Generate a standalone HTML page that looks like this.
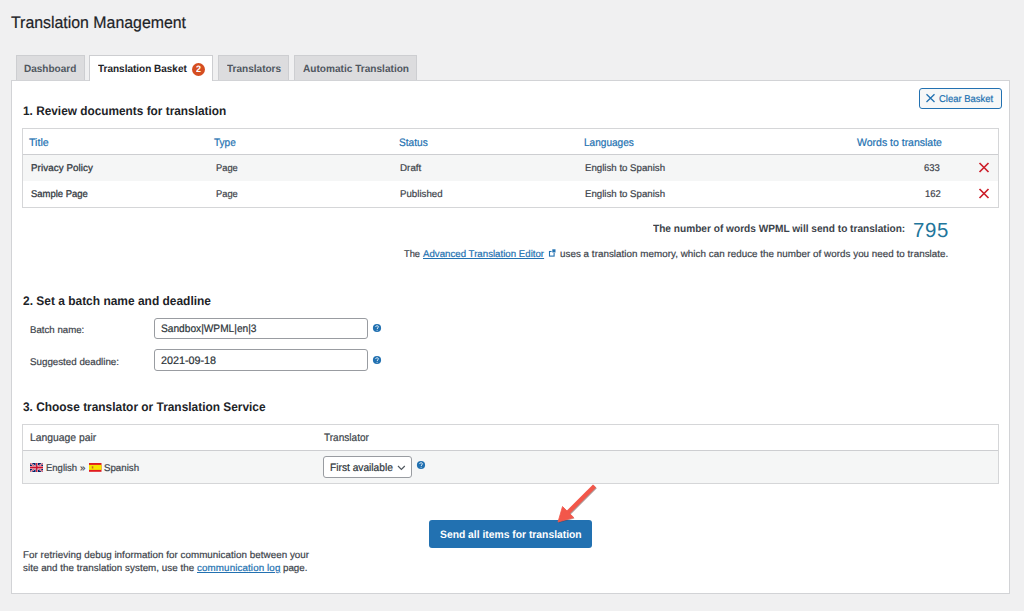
<!DOCTYPE html>
<html><head><meta charset="utf-8"><title>Translation Management</title><style>
html,body{margin:0;padding:0;}
body{width:1024px;height:611px;overflow:hidden;background:#f0f0f1;position:relative;font-family:"Liberation Sans",sans-serif;}
.t{position:absolute;white-space:nowrap;transform-origin:0 0;text-rendering:geometricPrecision;-webkit-text-stroke:0.2px currentColor;}
.r{position:absolute;box-sizing:border-box;}
svg{position:absolute;}
</style></head><body>
<div class="r" style="left:11px;top:80px;width:999.00px;height:514.30px;background:#fff;border:1px solid #d2d3d6;"></div>
<div class="r" style="left:16px;top:55px;width:69.00px;height:25.00px;background:#dcdcde;border:1px solid #cdced1;border-bottom:none;"></div>
<div class="r" style="left:89px;top:55px;width:124.00px;height:26.00px;background:#fff;border:1px solid #cdced1;border-bottom:none;"></div>
<div class="r" style="left:218px;top:55px;width:71.00px;height:25.00px;background:#dcdcde;border:1px solid #cdced1;border-bottom:none;"></div>
<div class="r" style="left:294px;top:55px;width:123.00px;height:25.00px;background:#dcdcde;border:1px solid #cdced1;border-bottom:none;"></div>
<div class="r" style="left:191.5px;top:62.8px;width:13.60px;height:13.60px;background:#d54e21;border-radius:50%;"></div>
<div class="r" style="left:919px;top:88px;width:83.00px;height:21.00px;background:#f6f7f7;border:1px solid #2271b1;border-radius:3px;"></div>
<svg style="left:925px;top:93px" width="11" height="10" viewBox="0 0 11 10"><path d="M1.5 1.2 L9.5 9 M9.5 1.2 L1.5 9" stroke="#2271b1" stroke-width="1.3" fill="none"/></svg>
<div class="r" style="left:22px;top:128px;width:977.00px;height:80.00px;background:#fff;border:1px solid #d5d6d8;"></div>
<div class="r" style="left:23px;top:154px;width:975.00px;height:1.30px;background:#cdced1;"></div>
<div class="r" style="left:23px;top:155px;width:975.00px;height:26.00px;background:#f5f6f6;"></div>
<svg style="left:978px;top:162.0px" width="12" height="11" viewBox="0 0 12 11"><path d="M1.5 1 L10.5 10 M10.5 1 L1.5 10" stroke="#cc1f2a" stroke-width="1.7" fill="none"/></svg>
<svg style="left:978px;top:187.6px" width="12" height="11" viewBox="0 0 12 11"><path d="M1.5 1 L10.5 10 M10.5 1 L1.5 10" stroke="#cc1f2a" stroke-width="1.7" fill="none"/></svg>
<svg style="left:547px;top:248px" width="10" height="10" viewBox="0 0 10 10"><rect x="2.5" y="3.5" width="4.6" height="4.6" stroke="#2271b1" stroke-width="1.1" fill="none"/><rect x="4.6" y="0.6" width="4.4" height="4.4" fill="#fff"/><rect x="5.3" y="1.3" width="3.2" height="3.2" fill="#2271b1"/></svg>
<div class="r" style="left:154px;top:318px;width:214.00px;height:21.00px;background:#fff;border:1px solid #999ca1;border-radius:3px;"></div>
<div class="r" style="left:154px;top:349px;width:214.00px;height:22.00px;background:#fff;border:1px solid #999ca1;border-radius:3px;"></div>
<svg style="left:372.00px;top:322.80px" width="10" height="10" viewBox="0 0 10 10"><circle cx="5" cy="5" r="4.1" fill="#2271b1"/><path d="M3.7 4 C3.7 2.3 6.4 2.3 6.4 3.9 C6.4 4.9 5.1 4.9 5.1 6" stroke="#e8f0f8" stroke-width="0.95" fill="none"/><circle cx="5.1" cy="7.3" r="0.55" fill="#e8f0f8"/></svg>
<svg style="left:372.00px;top:354.50px" width="10" height="10" viewBox="0 0 10 10"><circle cx="5" cy="5" r="4.1" fill="#2271b1"/><path d="M3.7 4 C3.7 2.3 6.4 2.3 6.4 3.9 C6.4 4.9 5.1 4.9 5.1 6" stroke="#e8f0f8" stroke-width="0.95" fill="none"/><circle cx="5.1" cy="7.3" r="0.55" fill="#e8f0f8"/></svg>
<div class="r" style="left:22px;top:424px;width:977.00px;height:60.00px;background:#f5f6f6;border:1px solid #d5d6d8;"></div>
<div class="r" style="left:23px;top:425px;width:975.00px;height:25.00px;background:#fff;"></div>
<div class="r" style="left:23px;top:450px;width:975.00px;height:1.30px;background:#cdced1;"></div>
<svg style="left:29.5px;top:463px" width="13.5" height="9" viewBox="0 0 60 30" preserveAspectRatio="none"><rect width="60" height="30" fill="#012169"/><path d="M0,0 L60,30 M60,0 L0,30" stroke="#fff" stroke-width="6"/><path d="M0,0 L60,30 M60,0 L0,30" stroke="#C8102E" stroke-width="3"/><path d="M30,0 V30 M0,15 H60" stroke="#fff" stroke-width="10"/><path d="M30,0 V30 M0,15 H60" stroke="#C8102E" stroke-width="6"/></svg>
<svg style="left:89px;top:463px" width="12.5" height="8.8" viewBox="0 0 12.5 8.8" preserveAspectRatio="none"><rect width="12.5" height="8.8" fill="#e01b1f"/><rect y="1.9" width="12.5" height="5" fill="#f5e400"/><rect x="2.8" y="3.3" width="1.5" height="2.2" fill="#d0602a"/></svg>
<div class="r" style="left:323px;top:456px;width:89.00px;height:22.00px;background:#fff;border:1px solid #999ca1;border-radius:3px;"></div>
<svg style="left:397.2px;top:464.6px" width="9" height="6" viewBox="0 0 9 6"><path d="M1 1 L4.4 4.4 L7.8 1" stroke="#50575e" stroke-width="1.15" fill="none"/></svg>
<svg style="left:415.80px;top:460.00px" width="10" height="10" viewBox="0 0 10 10"><circle cx="5" cy="5" r="4.1" fill="#2271b1"/><path d="M3.7 4 C3.7 2.3 6.4 2.3 6.4 3.9 C6.4 4.9 5.1 4.9 5.1 6" stroke="#e8f0f8" stroke-width="0.95" fill="none"/><circle cx="5.1" cy="7.3" r="0.55" fill="#e8f0f8"/></svg>
<div class="r" style="left:428.6px;top:519.9px;width:163.60px;height:28.10px;background:#2271b1;border-radius:3px;"></div>
<svg style="left:540px;top:478px" width="70" height="60" viewBox="540 478 70 60"><path d="M595.3 486.8 L567.8 514.3" stroke="rgba(70,30,30,0.45)" stroke-width="4.2" stroke-linecap="butt"/><path d="M558.8 522.8 L563.3 507.3 L574.6 518.4 Z" fill="rgba(70,30,30,0.35)"/><path d="M594.5 486 L567 513.5" stroke="#f2574a" stroke-width="4.3" stroke-linecap="butt"/><path d="M558 522 L562.5 506.5 L573.8 517.6 Z" fill="#f2574a" stroke="#f2574a" stroke-width="0.8" stroke-linejoin="round"/></svg>
<div class="t" style="left:11.10px;top:15.05px;font-size:16.6px;line-height:16.6px;color:#1d2327;transform:scaleX(0.9568);">Translation Management</div>
<div class="t" style="left:24.20px;top:64.50px;font-size:10.4px;line-height:10.4px;color:#50575e;font-weight:bold;-webkit-text-stroke:0;transform:scaleX(0.9625);">Dashboard</div>
<div class="t" style="left:98.30px;top:64.50px;font-size:10.4px;line-height:10.4px;color:#1d2327;font-weight:bold;-webkit-text-stroke:0;transform:scaleX(0.9609);">Translation Basket</div>
<div class="t" style="left:226.70px;top:64.50px;font-size:10.4px;line-height:10.4px;color:#50575e;font-weight:bold;-webkit-text-stroke:0;transform:scaleX(0.9655);">Translators</div>
<div class="t" style="left:302.70px;top:64.50px;font-size:10.4px;line-height:10.4px;color:#50575e;font-weight:bold;-webkit-text-stroke:0;transform:scaleX(0.9718);">Automatic Translation</div>
<div class="t" style="left:23.10px;top:104.90px;font-size:12.4px;line-height:12.4px;color:#1d2327;font-weight:bold;-webkit-text-stroke:0;transform:scaleX(0.9551);">1. Review documents for translation</div>
<div class="t" style="left:939.00px;top:94.62px;font-size:9.9px;line-height:9.9px;color:#2271b1;transform:scaleX(0.9597);">Clear Basket</div>
<div class="t" style="left:29.20px;top:137.66px;font-size:10.8px;line-height:10.8px;color:#2271b1;transform:scaleX(0.9854);">Title</div>
<div class="t" style="left:214.30px;top:137.66px;font-size:10.8px;line-height:10.8px;color:#2271b1;transform:scaleX(0.9315);">Type</div>
<div class="t" style="left:398.90px;top:137.66px;font-size:10.8px;line-height:10.8px;color:#2271b1;transform:scaleX(0.9388);">Status</div>
<div class="t" style="left:583.90px;top:137.66px;font-size:10.8px;line-height:10.8px;color:#2271b1;transform:scaleX(0.9327);">Languages</div>
<div class="t" style="left:856.75px;top:137.66px;font-size:10.8px;line-height:10.8px;color:#2271b1;transform:scaleX(0.9719);">Words to translate</div>
<div class="t" style="left:30.70px;top:163.90px;font-size:9.8px;line-height:9.8px;color:#2c3338;transform:scaleX(0.9999);letter-spacing:0.079px;-webkit-text-stroke:0.3px #3c434a;">Privacy Policy</div>
<div class="t" style="left:215.60px;top:163.90px;font-size:9.8px;line-height:9.8px;color:#3c434a;transform:scaleX(0.9500);">Page</div>
<div class="t" style="left:400.40px;top:163.90px;font-size:9.8px;line-height:9.8px;color:#3c434a;transform:scaleX(0.9999);letter-spacing:0.023px;">Draft</div>
<div class="t" style="left:585.30px;top:163.90px;font-size:9.8px;line-height:9.8px;color:#3c434a;transform:scaleX(0.9864);">English to Spanish</div>
<div class="t" style="left:30.70px;top:189.50px;font-size:9.8px;line-height:9.8px;color:#2c3338;transform:scaleX(0.9651);-webkit-text-stroke:0.3px #3c434a;">Sample Page</div>
<div class="t" style="left:215.60px;top:189.50px;font-size:9.8px;line-height:9.8px;color:#3c434a;transform:scaleX(0.9500);">Page</div>
<div class="t" style="left:400.40px;top:189.50px;font-size:9.8px;line-height:9.8px;color:#3c434a;transform:scaleX(0.9887);">Published</div>
<div class="t" style="left:585.30px;top:189.50px;font-size:9.8px;line-height:9.8px;color:#3c434a;transform:scaleX(0.9864);">English to Spanish</div>
<div class="t" style="left:923.71px;top:163.90px;font-size:9.8px;line-height:9.8px;color:#3c434a;transform:scaleX(0.9700);">633</div>
<div class="t" style="left:924.68px;top:189.50px;font-size:9.8px;line-height:9.8px;color:#3c434a;transform:scaleX(0.9700);">162</div>
<div class="t" style="left:653.10px;top:224.33px;font-size:10.6px;line-height:10.6px;color:#3c434a;font-weight:bold;-webkit-text-stroke:0;transform:scaleX(0.9551);">The number of words WPML will send to translation:</div>
<div class="t" style="left:912.60px;top:220.93px;font-size:20.4px;line-height:20.4px;color:#21759b;transform:scaleX(0.9999);letter-spacing:0.660px;-webkit-text-stroke:0;">795</div>
<div class="t" style="left:404.20px;top:250.00px;font-size:9.8px;line-height:9.8px;color:#3c434a;transform:scaleX(0.9500);">The</div>
<div class="t" style="left:423.00px;top:250.00px;font-size:9.8px;line-height:9.8px;color:#2271b1;transform:scaleX(0.9883);text-decoration:underline;">Advanced Translation Editor</div>
<div class="t" style="left:560.00px;top:250.00px;font-size:9.8px;line-height:9.8px;color:#3c434a;transform:scaleX(0.9999);letter-spacing:0.041px;">uses a translation memory, which can reduce the number of words you need to translate.</div>
<div class="t" style="left:23.20px;top:294.50px;font-size:12.4px;line-height:12.4px;color:#1d2327;font-weight:bold;-webkit-text-stroke:0;transform:scaleX(0.9647);">2. Set a batch name and deadline</div>
<div class="t" style="left:30.20px;top:326.00px;font-size:9.8px;line-height:9.8px;color:#3c434a;transform:scaleX(0.9865);">Batch name:</div>
<div class="t" style="left:30.20px;top:357.70px;font-size:9.8px;line-height:9.8px;color:#3c434a;transform:scaleX(0.9999);letter-spacing:-0.017px;">Suggested deadline:</div>
<div class="t" style="left:160.90px;top:324.26px;font-size:10.8px;line-height:10.8px;color:#2c3338;transform:scaleX(0.9415);">Sandbox|WPML|en|3</div>
<div class="t" style="left:160.90px;top:355.76px;font-size:10.8px;line-height:10.8px;color:#2c3338;transform:scaleX(0.9999);letter-spacing:-0.025px;">2021-09-18</div>
<div class="t" style="left:23.10px;top:400.80px;font-size:12.4px;line-height:12.4px;color:#1d2327;font-weight:bold;-webkit-text-stroke:0;transform:scaleX(0.9600);">3. Choose translator or Translation Service</div>
<div class="t" style="left:30.00px;top:432.96px;font-size:10.8px;line-height:10.8px;color:#3c434a;transform:scaleX(0.9605);">Language pair</div>
<div class="t" style="left:323.70px;top:432.76px;font-size:10.8px;line-height:10.8px;color:#3c434a;transform:scaleX(0.9320);">Translator</div>
<div class="t" style="left:46.00px;top:464.00px;font-size:9.8px;line-height:9.8px;color:#3c434a;transform:scaleX(0.9690);">English</div>
<div class="t" style="left:80.30px;top:464.00px;font-size:9.8px;line-height:9.8px;color:#3c434a;transform:scaleX(0.9999);">»</div>
<div class="t" style="left:104.30px;top:464.00px;font-size:9.8px;line-height:9.8px;color:#3c434a;transform:scaleX(0.9898);">Spanish</div>
<div class="t" style="left:330.30px;top:462.96px;font-size:10.8px;line-height:10.8px;color:#2c3338;transform:scaleX(0.9444);">First available</div>
<div class="t" style="left:439.80px;top:530.16px;font-size:10.8px;line-height:10.8px;color:#fff;font-weight:bold;-webkit-text-stroke:0;transform:scaleX(0.9560);">Send all items for translation</div>
<div class="t" style="left:22.80px;top:550.90px;font-size:9.8px;line-height:9.8px;color:#3c434a;transform:scaleX(0.9999);letter-spacing:0.048px;">For retrieving debug information for communication between your</div>
<div class="t" style="left:22.80px;top:563.60px;font-size:9.8px;line-height:9.8px;color:#3c434a;transform:scaleX(0.9999);letter-spacing:0.032px;">site and the translation system, use the</div>
<div class="t" style="left:197.30px;top:563.60px;font-size:9.8px;line-height:9.8px;color:#2271b1;transform:scaleX(0.9999);letter-spacing:0.104px;text-decoration:underline;">communication log</div>
<div class="t" style="left:283.30px;top:563.60px;font-size:9.8px;line-height:9.8px;color:#3c434a;transform:scaleX(0.9999);letter-spacing:-0.024px;">page.</div>
<div class="t" style="left:196.00px;top:65.31px;font-size:9.2px;line-height:9.2px;color:#fff;font-weight:bold;-webkit-text-stroke:0;transform:scaleX(0.9800);">2</div>
</body></html>
